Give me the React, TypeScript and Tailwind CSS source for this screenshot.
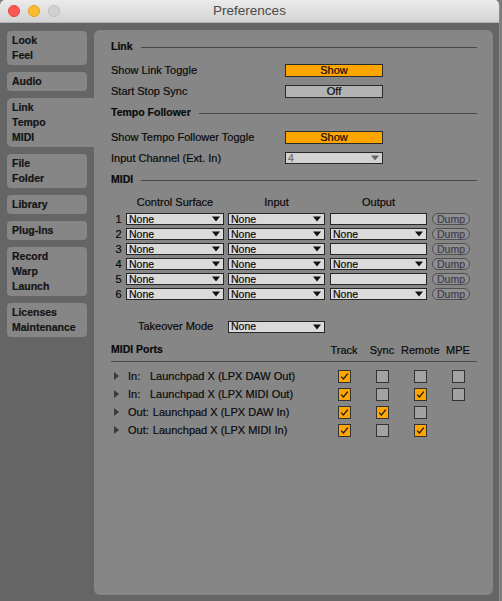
import React from "react";

// Preferences window: Link / Tempo / MIDI page
const tabs = [
  { lines: ["Look", "Feel"] },
  { lines: ["Audio"] },
  { lines: ["Link", "Tempo", "MIDI"], active: true },
  { lines: ["File", "Folder"] },
  { lines: ["Library"] },
  { lines: ["Plug-Ins"] },
  { lines: ["Record", "Warp", "Launch"] },
  { lines: ["Licenses", "Maintenance"] },
];

const midiRows = [1, 2, 3, 4, 5, 6];

type Port = {
  dir: string;
  name: string;
  track: boolean;
  sync: boolean;
  remote: boolean;
  mpe?: boolean;
};

const ports: Port[] = [
  { dir: "In:", name: "Launchpad X (LPX DAW Out)", track: true, sync: false, remote: false, mpe: false },
  { dir: "In:", name: "Launchpad X (LPX MIDI Out)", track: true, sync: false, remote: true, mpe: false },
  { dir: "Out:", name: "Launchpad X (LPX DAW In)", track: true, sync: true, remote: false },
  { dir: "Out:", name: "Launchpad X (LPX MIDI In)", track: true, sync: false, remote: true },
];

function Arrow({ color = "#111" }: { color?: string }) {
  return (
    <svg width="8" height="6" viewBox="0 0 8 6">
      <path d="M0 0.5h8L4 5.5z" fill={color} />
    </svg>
  );
}

function Select({ value, width, disabled }: { value: string; width: string; disabled?: boolean }) {
  return (
    <div
      className={`${width} h-[12px] border border-[#262626] flex items-center justify-between pl-[2px] pr-[3px] text-[10.5px] leading-none ${
        disabled ? "bg-[#d2d2d2] text-[#707070]" : "bg-[#dadada] text-[#0a0a0a]"
      }`}
    >
      <span>{value}</span>
      <Arrow color={disabled ? "#666" : "#111"} />
    </div>
  );
}

function Toggle({ label, on }: { label: string; on?: boolean }) {
  return (
    <div
      className={`w-[98px] h-[13px] border border-[#2b2b2b] flex items-center justify-center text-[11px] leading-none text-[#0a0a0a] ${
        on ? "bg-[#ffa500]" : "bg-[#b3b3b3]"
      }`}
    >
      {label}
    </div>
  );
}

function Check({ checked }: { checked: boolean }) {
  return (
    <div
      className={`w-[13px] h-[13px] border border-[#333] flex items-center justify-center ${
        checked ? "bg-[#ffa500]" : "bg-[#a2a2a2]"
      }`}
    >
      {checked && (
        <svg width="11" height="11" viewBox="0 0 11 11">
          <path d="M2.2 5.6L4.4 8L8.8 2.6" fill="none" stroke="#1c1c1c" strokeWidth="1.3" />
        </svg>
      )}
    </div>
  );
}

function SectionHeader({ title }: { title: string }) {
  return (
    <div className="h-[20px] flex items-center gap-[8px]">
      <span className="text-[10.5px] font-bold text-[#0a0a0a]">{title}</span>
      <div className="flex-1 h-px bg-[#474747]" />
    </div>
  );
}

function Row({ label, children, className = "" }: { label: string; children: React.ReactNode; className?: string }) {
  return (
    <div className={`h-[20px] flex items-center ${className}`}>
      <span className="w-[174px] text-[11px] text-[#0a0a0a]">{label}</span>
      {children}
    </div>
  );
}

export default function App() {
  return (
    <div className="w-[502px] h-[601px] bg-[#7c7c7c] flex overflow-hidden font-['Liberation_Sans',Arial,sans-serif] [-webkit-text-stroke:0.2px_currentColor]">
      <div className="w-[500px] h-[601px] rounded-t-[5px] bg-[#656565] flex flex-col border-r border-[#8a8a8a] overflow-hidden">
        {/* title bar */}
        <div className="h-[23px] shrink-0 relative flex items-center pl-[8px] gap-[8px] bg-gradient-to-b from-[#ebebeb] to-[#d3d3d3] border-b border-[#b4b4b4]">
          <div className="w-[12px] h-[12px] rounded-full bg-[#fc5652] border border-[#e0443e]" />
          <div className="w-[12px] h-[12px] rounded-full bg-[#fdbb2e] border border-[#dea123]" />
          <div className="w-[12px] h-[12px] rounded-full bg-[#d1d1d1] border border-[#bdbdbd]" />
          <div className="absolute inset-0 flex items-center justify-center text-[13.5px] text-[#4a4a4a] pointer-events-none [-webkit-text-stroke:0px]">
            Preferences
          </div>
        </div>

        <div className="flex pt-[7px]">
          {/* sidebar */}
          <div className="w-[94px] shrink-0 pl-[7px] pt-[1px] flex flex-col gap-[7px]">
            {tabs.map((t) => (
              <div
                key={t.lines[0]}
                className={`py-[2px] pl-[5px] text-[10.5px] leading-[15px] font-bold text-[#141414] bg-[#868686] ${
                  t.active ? "w-[87px] rounded-l-[5px]" : "w-[80px] rounded-[4px]"
                }`}
              >
                {t.lines.map((l) => (
                  <div key={l}>{l}</div>
                ))}
              </div>
            ))}
          </div>

          {/* settings panel */}
          <div className="w-[399px] h-[565px] bg-[#868686] rounded-[6px] pl-[17px] pr-[16px] pt-[7px] flex flex-col">
            <SectionHeader title="Link" />
            <Row label="Show Link Toggle" className="mt-[3px]">
              <Toggle label="Show" on />
            </Row>
            <Row label="Start Stop Sync" className="mt-[1px]">
              <Toggle label="Off" />
            </Row>
            <div className="mt-[2px]">
              <SectionHeader title="Tempo Follower" />
            </div>
            <Row label="Show Tempo Follower Toggle" className="mt-[4px]">
              <Toggle label="Show" on />
            </Row>
            <Row label="Input Channel (Ext. In)" className="mt-[1px]">
              <Select value="4" width="w-[98px]" disabled />
            </Row>
            <div className="mt-[2px]">
              <SectionHeader title="MIDI" />
            </div>

            {/* control surfaces */}
            <div className="mt-[2px] h-[20px] flex items-center text-[11px] text-[#0a0a0a]">
              <div className="w-[15px]" />
              <div className="w-[98px] text-center">Control Surface</div>
              <div className="w-[97px] ml-[4px] text-center">Input</div>
              <div className="w-[97px] ml-[5px] text-center">Output</div>
            </div>
            {midiRows.map((n) => (
              <div key={n} className="h-[15px] flex items-start pt-[1px]">
                <div className="w-[15px] h-[12px] flex items-center justify-center text-[11px] leading-none text-[#0a0a0a]">
                  {n}
                </div>
                <Select value="None" width="w-[98px]" />
                <div className="ml-[4px]">
                  <Select value="None" width="w-[97px]" />
                </div>
                <div className="ml-[5px]">
                  {n % 2 === 0 ? (
                    <Select value="None" width="w-[97px]" />
                  ) : (
                    <div className="w-[97px] h-[12px] border border-[#262626] bg-[#dadada]" />
                  )}
                </div>
                <div className="ml-[5px] w-[38px] h-[12px] rounded-full border border-[#505050] bg-[#8f8f8f] flex items-center justify-center text-[10.5px] leading-none text-[#3e4050]">
                  Dump
                </div>
              </div>
            ))}

            <div className="mt-[17px] h-[15px] flex items-center">
              <span className="w-[117px] pl-[27px] text-[11px] text-[#0a0a0a]">Takeover Mode</span>
              <Select value="None" width="w-[97px]" />
            </div>

            {/* MIDI ports */}
            <div className="mt-[6px] h-[22px] pb-[1px] flex items-center border-b border-[#4a4a4a] text-[11px] text-[#0a0a0a]">
              <span className="flex-1 font-bold text-[10.5px]">MIDI Ports</span>
              <span className="w-[38px] text-center">Track</span>
              <span className="w-[38px] text-center">Sync</span>
              <span className="w-[38px] text-center">Remote</span>
              <span className="w-[38px] text-center">MPE</span>
            </div>
            <div className="mt-[5px] flex flex-col">
              {ports.map((p) => (
                <div key={p.name} className="h-[18px] flex items-center text-[11px] text-[#0a0a0a]">
                  <svg width="5" height="8" viewBox="0 0 5 8" className="ml-[3px]">
                    <path d="M0 0L5 4L0 8z" fill="#3a3a3a" />
                  </svg>
                  <span className="ml-[9px] min-w-[22px] pr-[4px]">{p.dir}</span>
                  <span className="flex-1">{p.name}</span>
                  <div className="w-[38px] flex justify-center">
                    <Check checked={p.track} />
                  </div>
                  <div className="w-[38px] flex justify-center">
                    <Check checked={p.sync} />
                  </div>
                  <div className="w-[38px] flex justify-center">
                    <Check checked={p.remote} />
                  </div>
                  <div className="w-[38px] flex justify-center">
                    {p.mpe !== undefined && <Check checked={p.mpe} />}
                  </div>
                </div>
              ))}
            </div>
          </div>
        </div>
      </div>
    </div>
  );
}
